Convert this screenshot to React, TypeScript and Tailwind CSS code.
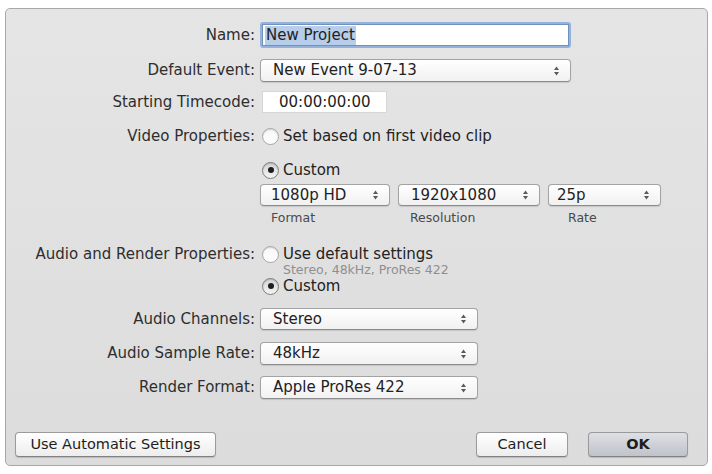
import type { ReactNode } from 'react';

function Arrows() {
  return (
    <svg width="7" height="12" viewBox="0 0 7 12" className="shrink-0">
      <path d="M3.5 1.5 L6 5 L1 5 Z" fill="#5a5a5a" />
      <path d="M3.5 10.5 L6 7 L1 7 Z" fill="#5a5a5a" />
    </svg>
  );
}

function Select({ value, width, height = 'h-[22px]', pad = 'pl-[12px]' }: { value: string; width: string; height?: string; pad?: string }) {
  return (
    <div
      className={`${width} ${height} ${pad} pr-[10px] flex items-center justify-between rounded-[4px] border border-[#a3a3a3] border-b-[#8c8c8c] bg-gradient-to-b from-white to-[#f1f1f1] shadow-[0_1px_1px_rgba(0,0,0,0.12)]`}
    >
      <span>{value}</span>
      <Arrows />
    </div>
  );
}

function Radio({ checked, children }: { checked?: boolean; children: ReactNode }) {
  return (
    <div className="flex items-center gap-[4px] ml-[2px]">
      <div
        className={`w-[17px] h-[17px] rounded-full border flex items-center justify-center ${
          checked
            ? 'border-[#7d7d7d] bg-gradient-to-b from-[#d4d4d4] to-[#f4f4f4]'
            : 'border-[#a6a6a6] bg-gradient-to-b from-[#f7f7f7] to-white'
        } shadow-[inset_0_1px_1px_rgba(0,0,0,0.15)]`}
      >
        {checked && <div className="w-[6px] h-[6px] rounded-full bg-[#1e1e1e]" />}
      </div>
      <span>{children}</span>
    </div>
  );
}

function Row({ label, className, children }: { label?: string; className: string; children: ReactNode }) {
  return (
    <div className={`flex items-center ${className}`}>
      <div className="w-[249px] text-right text-[#2e2e2e]">{label}</div>
      <div className="ml-[5px] flex items-center">{children}</div>
    </div>
  );
}

function Button({ children, className }: { children: ReactNode; className: string }) {
  return (
    <div
      className={`h-[25px] flex items-center justify-center rounded-[4px] border border-[#9b9b9b] border-b-[#808080] shadow-[0_1px_1px_rgba(0,0,0,0.15)] text-[14.5px] text-[#1d1d1d] ${className}`}
    >
      {children}
    </div>
  );
}

export default function App() {
  return (
    <div className="w-[712px] h-[474px] bg-white pt-[8px] pl-[5px] font-['DejaVu_Sans',sans-serif] text-[15px] leading-none text-[#222]">
      <div className="w-[703px] h-[458px] rounded-[5px] border border-[#a8a8a8] bg-gradient-to-b from-[#e5e5e5] to-[#dcdcdc] flex flex-col">
        <Row label="Name:" className="mt-[13px] h-[26px]">
          <div className="w-[311px] h-[26px] rounded-[3px] border-[2px] border-[#94b3dc] flex">
            <div className="flex-1 bg-white border border-[#7190bd] flex items-center pl-[2px]">
              <span className="bg-[#b7cde9] px-[1px] py-[2px]">New Project</span>
            </div>
          </div>
        </Row>

        <Row label="Default Event:" className="mt-[11px] h-[23px]">
          <Select value="New Event 9-07-13" width="w-[311px]" height="h-[23px]" />
        </Row>

        <Row label="Starting Timecode:" className="mt-[9px] h-[22px]">
          <div className="ml-[2px] w-[125px] h-[22px] bg-white border border-[#d6d6d6] flex items-center pl-[16px]">
            00:00:00:00
          </div>
        </Row>

        <Row label="Video Properties:" className="mt-[13px] h-[20px]">
          <Radio>Set based on first video clip</Radio>
        </Row>

        <Row className="mt-[14px] h-[20px]">
          <Radio checked>Custom</Radio>
        </Row>

        <Row className="mt-[4px] h-[22px]">
          <div className="flex gap-[8px]">
            <Select value="1080p HD" width="w-[130px]" pad="pl-[10px]" />
            <Select value="1920x1080" width="w-[142px]" pad="pl-[12px]" />
            <Select value="25p" width="w-[113px]" pad="pl-[8px]" />
          </div>
        </Row>

        <Row className="mt-[5px] h-[15px]">
          <div className="flex text-[12.5px] text-[#4a4a4a]">
            <span className="w-[138px] pl-[11px]">Format</span>
            <span className="w-[150px] pl-[12px]">Resolution</span>
            <span className="pl-[20px]">Rate</span>
          </div>
        </Row>

        <Row label="Audio and Render Properties:" className="mt-[18px] h-[20px]">
          <Radio>Use default settings</Radio>
        </Row>
        <Row className="h-[12px]">
          <span className="ml-[23px] text-[12.5px] text-[#8f8f8f]">Stereo, 48kHz, ProRes 422</span>
        </Row>
        <Row className="h-[20px]">
          <Radio checked>Custom</Radio>
        </Row>

        <Row label="Audio Channels:" className="mt-[12px] h-[22px]">
          <Select value="Stereo" width="w-[218px]" />
        </Row>
        <Row label="Audio Sample Rate:" className="mt-[12px] h-[23px]">
          <Select value="48kHz" width="w-[218px]" height="h-[23px]" />
        </Row>
        <Row label="Render Format:" className="mt-[11px] h-[23px]">
          <Select value="Apple ProRes 422" width="w-[218px]" height="h-[23px]" />
        </Row>

        <div className="mt-auto mb-[8px] pl-[9px] pr-[19px] flex items-center">
          <Button className="w-[201px] bg-gradient-to-b from-white to-[#ededed]">Use Automatic Settings</Button>
          <div className="flex-1" />
          <Button className="w-[92px] bg-gradient-to-b from-white to-[#ededed]">Cancel</Button>
          <Button className="ml-[20px] w-[100px] border-[#7f838a] bg-gradient-to-b from-[#dde0e5] to-[#bfc3ca] font-bold">
            OK
          </Button>
        </div>
      </div>
    </div>
  );
}
